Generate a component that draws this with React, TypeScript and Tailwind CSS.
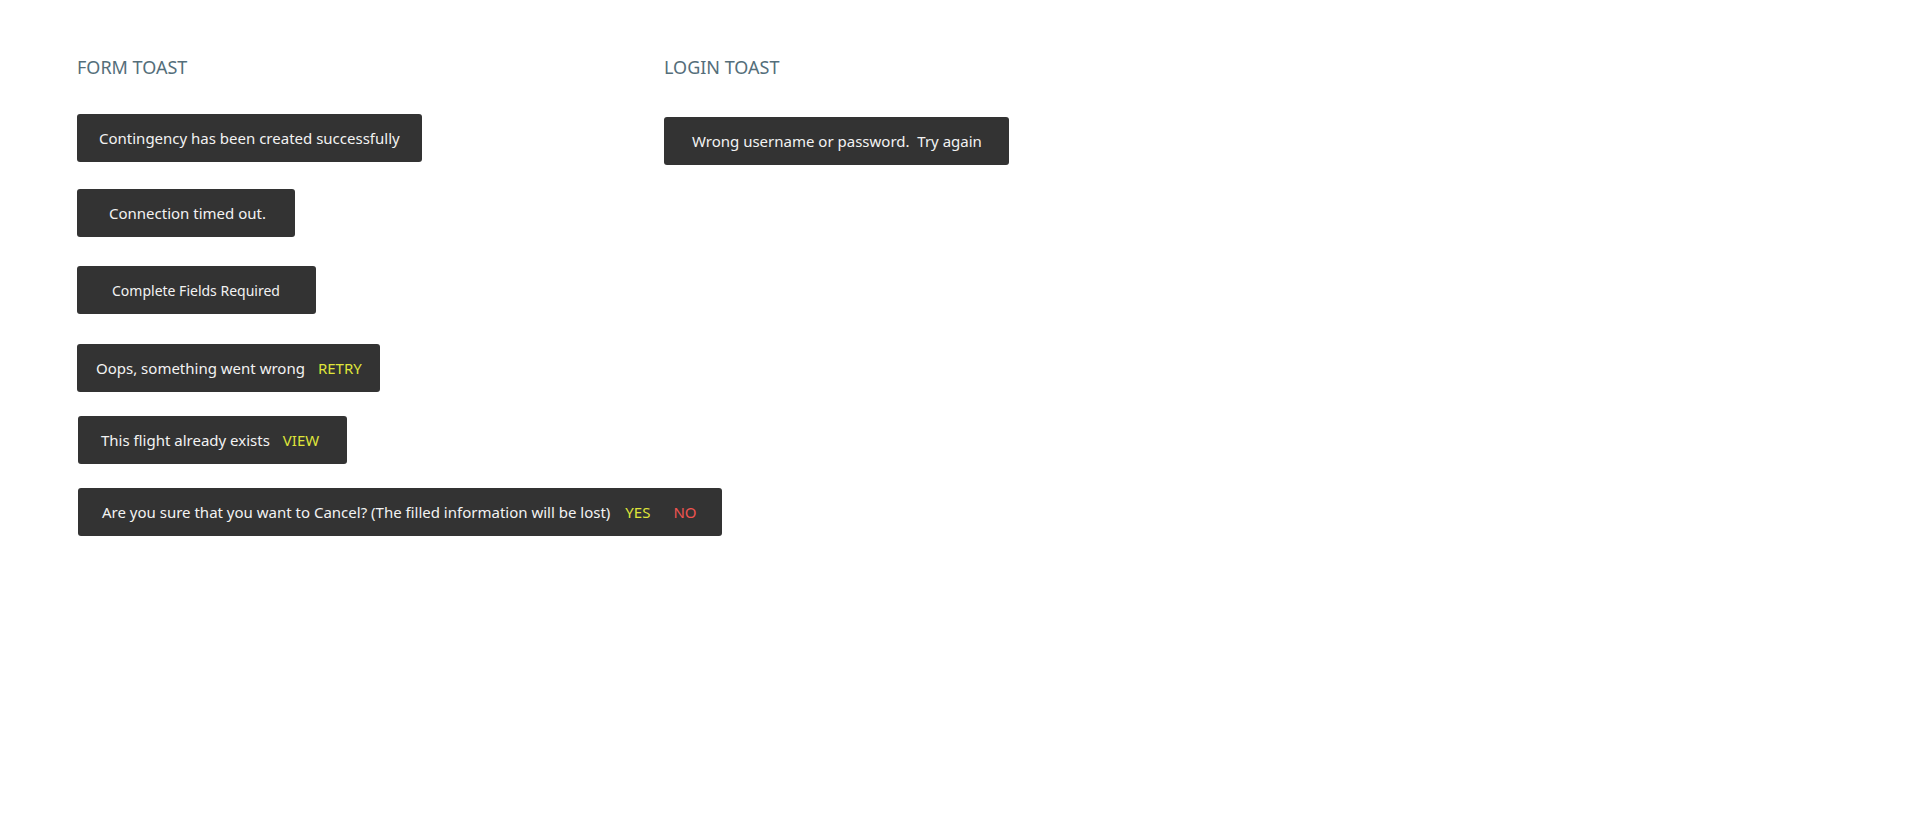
type ToastAction = { label: string; color: string; gap: string };

type ToastProps = {
  text: string;
  width: string;
  pad: string;
  textSize?: string;
  actions?: ToastAction[];
};

function Toast({ text, width, pad, textSize = "text-[15px]", actions = [] }: ToastProps) {
  return (
    <div
      className={`flex h-12 items-center rounded-[3px] bg-[#333333] ${width} ${pad} ${textSize} whitespace-pre text-[#f2f2f2]`}
    >
      <span>{text}</span>
      {actions.map((a) => (
        <span key={a.label} className={`${a.gap} ${a.color}`}>
          {a.label}
        </span>
      ))}
    </div>
  );
}

export default function App() {
  return (
    <div className="min-h-screen bg-white pl-[77px] pt-[54px] font-['Noto_Sans',sans-serif]">
      <div className="flex">
        <div className="flex w-[587px] flex-col">
          <h2 className="text-[18px] text-[#546e7a]">FORM TOAST</h2>
          <div className="mt-[33px] flex flex-col items-start">
            <Toast text="Contingency has been created successfully" width="w-[345px]" pad="pl-[22px]" />
            <div className="mt-[27px]">
              <Toast text="Connection timed out." width="w-[218px]" pad="pl-[32px]" />
            </div>
            <div className="mt-[29px]">
              <Toast text="Complete Fields Required" width="w-[239px]" pad="pl-[35px]" textSize="text-[14px]" />
            </div>
            <div className="mt-[30px]">
              <Toast
                text="Oops, something went wrong"
                width="w-[303px]"
                pad="pl-[19px]"
                actions={[{ label: "RETRY", color: "text-[#dfe43a]", gap: "ml-[13px]" }]}
              />
            </div>
            <div className="ml-px mt-[24px]">
              <Toast
                text="This flight already exists"
                width="w-[269px]"
                pad="pl-[23px]"
                actions={[{ label: "VIEW", color: "text-[#dfe43a]", gap: "ml-[13px]" }]}
              />
            </div>
            <div className="ml-px mt-[24px]">
              <Toast
                text="Are you sure that you want to Cancel? (The filled information will be lost)"
                width="w-[644px]"
                pad="pl-[24px]"
                actions={[
                  { label: "YES", color: "text-[#dfe43a]", gap: "ml-[15px]" },
                  { label: "NO", color: "text-[#ef5350]", gap: "ml-[23px]" },
                ]}
              />
            </div>
          </div>
        </div>

        <div className="flex flex-col">
          <h2 className="text-[18px] text-[#546e7a]">LOGIN TOAST</h2>
          <div className="mt-[36px]">
            <Toast text="Wrong username or password.  Try again" width="w-[345px]" pad="pl-[28px]" />
          </div>
        </div>
      </div>
    </div>
  );
}
